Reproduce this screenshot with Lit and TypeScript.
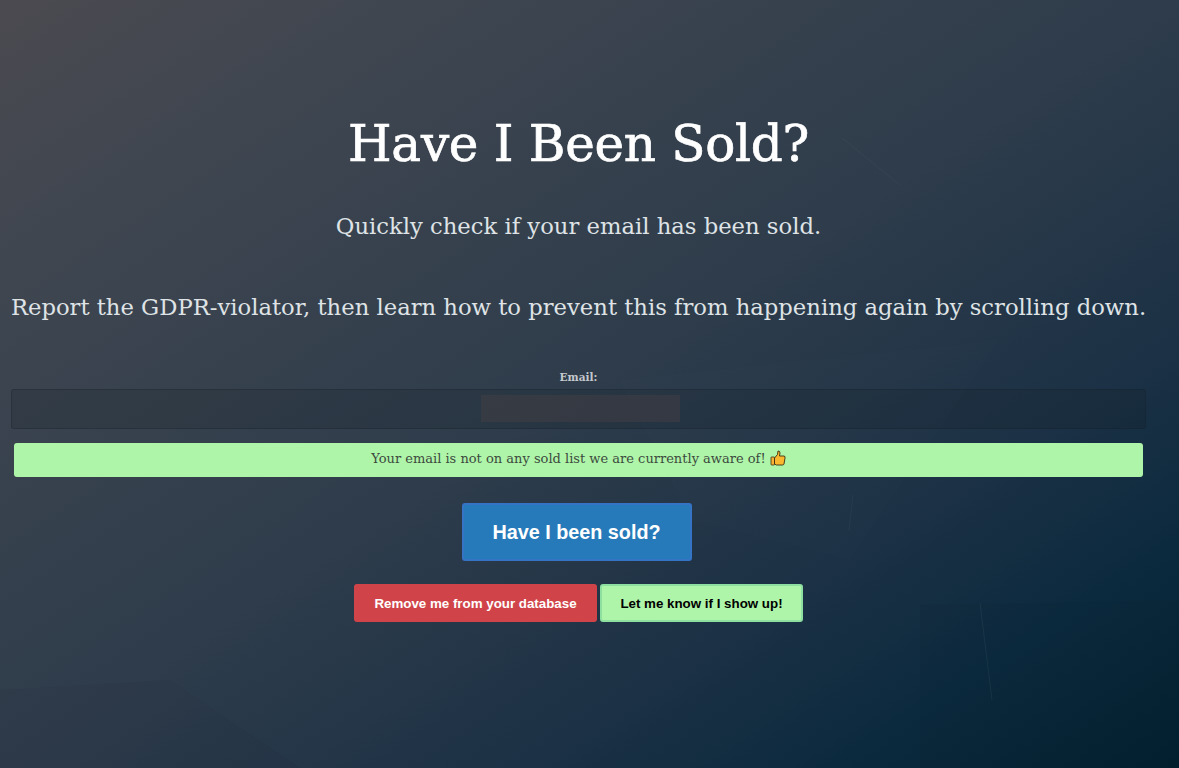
import { LitElement, html, css } from "lit";
import { customElement } from "lit/decorators.js";

@customElement("app-root")
export class AppRoot extends LitElement {
  static styles = css`
    :host {
      display: block;
      position: relative;
      height: 768px;
      overflow: hidden;
      background: linear-gradient(to bottom right, #4b4a50 0%, #3f4650 18%, #2e3c4b 50%, #1c3145 72%, #0c2a3e 85%, #02202f 100%);
      font-family: "DejaVu Serif", "Liberation Serif", serif;
      color: #fff;
    }
    .bg { position: absolute; inset: 0; width: 100%; height: 100%; }
    .page {
      position: relative;
      display: flex;
      flex-direction: column;
      align-items: center;
      padding: 0 33px 0 11px;
    }
    h1 {
      margin: 112px 0 0;
      font-size: 50px;
      line-height: 64px;
      font-weight: 400;
      letter-spacing: -0.3px;
      white-space: nowrap;
      -webkit-text-stroke: 0.7px #fff;
    }
    .sub {
      margin: 34px 0 0;
      font-size: 22.7px;
      line-height: 32px;
      color: #dfe3e6;
      font-weight: 400;
      white-space: nowrap;
    }
    .lead { margin-top: 49px; }
    label {
      margin-top: 47px;
      font-size: 10.5px;
      line-height: 14px;
      font-weight: 700;
      color: #c4c8cc;
    }
    .field {
      box-sizing: border-box;
      align-self: stretch;
      height: 40px;
      margin-top: 5px;
      display: flex;
      justify-content: center;
      align-items: center;
      border: 1px solid rgba(20, 30, 40, 0.3);
      border-radius: 3px;
      background: rgba(15, 25, 35, 0.18);
    }
    .field span {
      width: 199px;
      height: 27px;
      margin: 0 0 2px 3px;
      background: rgba(75, 65, 70, 0.42);
    }
    .ok {
      align-self: stretch;
      margin: 14px 3px 0;
      height: 34px;
      border-radius: 3px;
      background: #aff5a9;
      color: #3c4a3e;
      font-size: 13px;
      line-height: 31px;
      text-align: center;
      white-space: nowrap;
    }
    .thumb { display: inline-block; vertical-align: -3px; width: 16px; height: 16px; }
    button {
      box-sizing: border-box;
      font-family: "Liberation Sans", Arial, sans-serif;
      font-weight: 700;
      border-radius: 3px;
      cursor: pointer;
      white-space: nowrap;
      padding: 0;
    }
    .main {
      width: 230px;
      height: 58px;
      margin: 26px 4px 0 0;
      padding-top: 1px;
      font-size: 19.8px;
      color: #fff;
      background: #277ab9;
      border: 2px solid #3573c4;
    }
    .row { display: flex; gap: 3px; margin-top: 23px; }
    .row button { height: 38px; font-size: 13.33px; }
    .red { width: 243px; background: #d04449; color: #fff; border: 0; }
    .green { width: 203px; background: #aff5a9; color: #000; border: 2px solid #8ee0a0; }
  `;

  render() {
    return html`
      <svg class="bg" viewBox="0 0 1179 768" preserveAspectRatio="none" aria-hidden="true">
        <polygon points="620,380 1000,340 850,560 690,520" fill="#fff" opacity="0.006"></polygon>
        <polygon points="920,605 1179,600 1179,768 920,768" fill="#000" opacity="0.025"></polygon>
        <polygon points="0,690 170,680 300,768 0,768" fill="#2b1a30" opacity="0.05"></polygon>
        <line x1="842" y1="138" x2="900" y2="185" stroke="#fff" stroke-opacity="0.035"></line>
        <line x1="853" y1="495" x2="849" y2="531" stroke="#fff" stroke-opacity="0.04"></line>
        <line x1="980" y1="603" x2="992" y2="700" stroke="#fff" stroke-opacity="0.05"></line>
      </svg>
      <div class="page">
        <h1>Have I Been Sold?</h1>
        <p class="sub">Quickly check if your email has been sold.</p>
        <p class="sub lead">Report the GDPR-violator, then learn how to prevent this from happening again by scrolling down.</p>
        <label>Email:</label>
        <div class="field"><span></span></div>
        <div class="ok">
          Your email is not on any sold list we are currently aware of!
          <svg class="thumb" viewBox="0 0 16 16" aria-hidden="true">
            <rect x="1" y="7" width="3.5" height="8" rx="0.6" fill="#f9b233" stroke="#3a2c10" stroke-width="0.8"></rect>
            <path d="M4.5 8 L7.5 4.5 L8 1 Q10 0.8 10 3 L9.5 6 H14 Q15.5 6.2 15 8 L14 14 Q13.7 15 12.5 15 H6.5 L4.5 14 Z" fill="#fbb82e" stroke="#3a2c10" stroke-width="0.9"></path>
          </svg>
        </div>
        <button class="main">Have I been sold?</button>
        <div class="row">
          <button class="red">Remove me from your database</button>
          <button class="green">Let me know if I show up!</button>
        </div>
      </div>
    `;
  }
}
